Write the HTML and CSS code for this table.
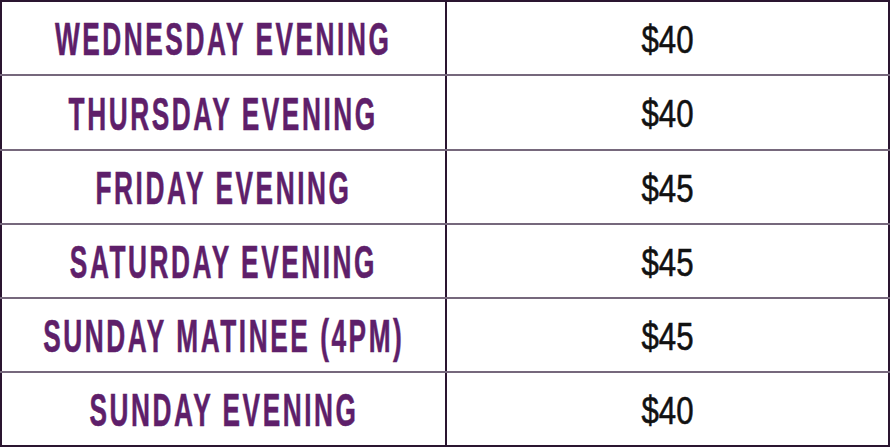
FILE: index.html
```html
<!DOCTYPE html>
<html>
<head>
<meta charset="utf-8">
<link rel="stylesheet" href="styles.css">
</head>
<body>
<table class="prices">
  <tr><td class="day"><div class="cell"><span class="label">WEDNESDAY EVENING</span></div></td><td class="price"><div class="cell"><span class="amount">$40</span></div></td></tr>
  <tr><td class="day"><div class="cell"><span class="label">THURSDAY EVENING</span></div></td><td class="price"><div class="cell"><span class="amount">$40</span></div></td></tr>
  <tr><td class="day"><div class="cell"><span class="label">FRIDAY EVENING</span></div></td><td class="price"><div class="cell"><span class="amount">$45</span></div></td></tr>
  <tr><td class="day"><div class="cell"><span class="label">SATURDAY EVENING</span></div></td><td class="price"><div class="cell"><span class="amount">$45</span></div></td></tr>
  <tr><td class="day"><div class="cell"><span class="label">SUNDAY MATINEE (4PM)</span></div></td><td class="price"><div class="cell"><span class="amount">$45</span></div></td></tr>
  <tr><td class="day"><div class="cell"><span class="label">SUNDAY EVENING</span></div></td><td class="price"><div class="cell"><span class="amount">$40</span></div></td></tr>
</table>
</body>
</html>
```
FILE: styles.css
```css
html, body {
  margin: 0;
  padding: 0;
  background: #ffffff;
}
.prices {
  width: 890px;
  border-collapse: collapse;
  border: 2px solid #2a1530;
  table-layout: fixed;
}
.prices td {
  height: 72px;
  padding: 0;
  vertical-align: middle;
  border-top: 2px solid #76687c;
  border-bottom: 2px solid #76687c;
}
.prices tr:nth-child(2) td { height: 73px; }
.prices tr:first-child td { border-top: 2px solid #2a1530; }
.prices tr:last-child td { border-bottom: 2px solid #2a1530; }
.prices td.day {
  width: 443px;
  border-right: 2px solid #2a1530;
}
.cell {
  display: flex;
  justify-content: center;
  align-items: center;
  white-space: nowrap;
  overflow: visible;
}
.label {
  display: inline-block;
  color: #5e1f6a;
  font-family: "Liberation Sans", Arial, sans-serif;
  font-weight: bold;
  font-size: 46px;
  line-height: 1;
  letter-spacing: 4.5px;
  transform: scaleX(0.57);
  -webkit-text-stroke: 0.6px #5e1f6a;
  margin-top: 2px;
}
.amount {
  display: inline-block;
  color: #111111;
  font-family: "Liberation Sans", Arial, sans-serif;
  font-size: 39px;
  line-height: 1;
  transform: scaleX(0.8);
  -webkit-text-stroke: 0.6px #111111;
  margin-top: 2px;
}
```
